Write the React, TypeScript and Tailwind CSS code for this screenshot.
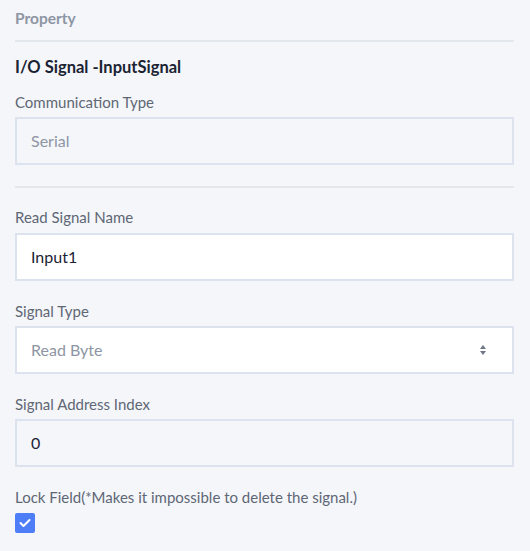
import React from "react";

const font = { fontFamily: "Lato, 'Noto Sans', sans-serif" };

function Label({ children }: { children: React.ReactNode }) {
  return <div className="text-[15px] leading-[20px] text-[#5f6775]">{children}</div>;
}

export default function App() {
  return (
    <div className="w-[530px] h-[551px] bg-[#f4f6fa] pl-[15px] pr-[16px] pt-[8px]" style={font}>
      <div className="text-[15.5px] font-bold leading-[20px] text-[#8e95a3]">Property</div>
      <div className="mt-[12px] h-[2px] bg-[#e3e7ee]" />
      <div className="mt-[15px] text-[16.5px] font-bold leading-[20px] text-[#1b2333]">I/O Signal -InputSignal</div>
      <div className="mt-[15px]">
        <Label>Communication Type</Label>
        <div className="mt-[5px] h-[48px] border-2 border-[#dde3ee] bg-[#f4f6fa] flex items-center px-[14px] text-[16px] text-[#8e95a3]">
          Serial
        </div>
      </div>
      <div className="mt-[21px] h-[2px] bg-[#e3e7ee]" />
      <div className="mt-[19px]">
        <Label>Read Signal Name</Label>
        <div className="mt-[6px] h-[48px] border-2 border-[#dde3ee] bg-white flex items-center px-[14px] text-[16px] text-[#1b2333]">
          Input1
        </div>
      </div>
      <div className="mt-[20px]">
        <Label>Signal Type</Label>
        <div className="mt-[5px] h-[48px] border-2 border-[#dde3ee] bg-white flex items-center justify-between pl-[14px] pr-[25px] text-[16px] text-[#8e95a3]">
          <span>Read Byte</span>
          <svg width="8" height="12" viewBox="0 0 8 12">
            <path d="M4 1 L7 5 L1 5 Z" fill="#6f7787" />
            <path d="M4 11 L7 7 L1 7 Z" fill="#6f7787" />
          </svg>
        </div>
      </div>
      <div className="mt-[20px]">
        <Label>Signal Address Index</Label>
        <div className="mt-[5px] h-[48px] border-2 border-[#dde3ee] bg-[#f4f6fa] flex items-center px-[14px] text-[16px] text-[#1b2333]">
          0
        </div>
      </div>
      <div className="mt-[20px]">
        <Label>Lock Field(*Makes it impossible to delete the signal.)</Label>
        <div className="mt-[6px] w-[20px] h-[20px] bg-[#4d7ef7] rounded-[2px] flex items-center justify-center">
          <svg width="12" height="10" viewBox="0 0 12 10">
            <path d="M1.5 5 L4.5 8 L10.5 2" stroke="white" strokeWidth="2" fill="none" strokeLinecap="round" strokeLinejoin="round" />
          </svg>
        </div>
      </div>
    </div>
  );
}
